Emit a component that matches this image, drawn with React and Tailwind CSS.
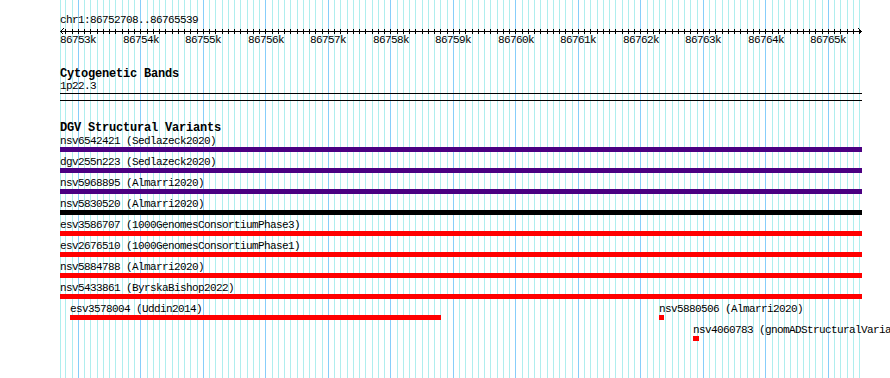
import React from "react";

const START = 86752708;
const px = (b) => 60 + (b - START) / 16;

const gridLines = (() => {
  const arr = [{ x: 60, major: false }];
  for (let b = 86752800; b <= 86765500; b += 100) {
    arr.push({ x: Math.floor(px(b)), major: b % 1000 === 0 });
  }
  return arr;
})();

const kbLabels = [];
for (let k = 86753; k <= 86765; k++) {
  kbLabels.push({ k, left: Math.round(px(k * 1000) - 18) });
}

const rows = [
  [{ name: "nsv6542421 (Sedlazeck2020)", x: 60, w: 802, color: "bg-[#4b0082]" }],
  [{ name: "dgv255n223 (Sedlazeck2020)", x: 60, w: 802, color: "bg-[#4b0082]" }],
  [{ name: "nsv5968895 (Almarri2020)", x: 60, w: 802, color: "bg-[#4b0082]" }],
  [{ name: "nsv5830520 (Almarri2020)", x: 60, w: 802, color: "bg-black" }],
  [{ name: "esv3586707 (1000GenomesConsortiumPhase3)", x: 60, w: 802, color: "bg-[#ff0000]" }],
  [{ name: "esv2676510 (1000GenomesConsortiumPhase1)", x: 60, w: 802, color: "bg-[#ff0000]" }],
  [{ name: "nsv5884788 (Almarri2020)", x: 60, w: 802, color: "bg-[#ff0000]" }],
  [{ name: "nsv5433861 (ByrskaBishop2022)", x: 60, w: 802, color: "bg-[#ff0000]" }],
  [
    { name: "esv3578004 (Uddin2014)", x: 70, w: 371, color: "bg-[#ff0000]" },
    { name: "nsv5880506 (Almarri2020)", x: 659, w: 5, color: "bg-[#ff0000]" },
  ],
  [{ name: "nsv4060783 (gnomADStructuralVariants)", x: 693, w: 6, color: "bg-[#ff0000]" }],
];

const txt = "font-['Liberation_Mono',monospace] text-[11px] leading-[11px] tracking-[-0.6px] text-black whitespace-nowrap";
const bold = "font-['Liberation_Mono',monospace] text-[12px] leading-[12px] tracking-[-0.2px] font-bold text-black whitespace-nowrap";

function Grid() {
  return (
    <svg className="absolute inset-0" width="890" height="378" shapeRendering="crispEdges">
      {gridLines.map((g, i) => (
        <line
          key={i}
          x1={g.x + 0.5}
          x2={g.x + 0.5}
          y1={0}
          y2={378}
          stroke={g.major ? "#87cefa" : "#afeeee"}
          strokeWidth="1"
        />
      ))}
    </svg>
  );
}

function Ruler() {
  const ticks = gridLines.slice(1);
  return (
    <svg width="890" height="9" className="block" shapeRendering="crispEdges">
      <line x1="60" x2="862" y1="5.5" y2="5.5" stroke="#000" strokeWidth="1" />
      {ticks.map((t, i) => (
        <line key={i} x1={t.x + 0.5} x2={t.x + 0.5} y1="3" y2="8" stroke="#000" strokeWidth="1" />
      ))}
      <polyline points="63.5,2.5 60.5,5.5 63.5,8.5" fill="none" stroke="#000" strokeWidth="1" />
      <polyline points="858.5,2.5 861.5,5.5 858.5,8.5" fill="none" stroke="#000" strokeWidth="1" />
    </svg>
  );
}

function FeatureRow({ feats }) {
  return (
    <div className="relative h-[21px]">
      {feats.map((f, i) => (
        <div key={i} className="absolute top-0 flex flex-col" style={{ left: f.x }}>
          <div className={`${txt} h-[11px]`}>{f.name}</div>
          <div className={`${f.color} h-[5px]`} style={{ width: f.w }} />
        </div>
      ))}
    </div>
  );
}

export default function App() {
  return (
    <div className="relative w-[890px] h-[378px] overflow-hidden bg-white">
      <Grid />
      <div className="relative flex flex-col pt-[15px]">
        <div className={`${txt} pl-[60px] h-[11px]`}>chr1:86752708..86765539</div>
        <Ruler />
        <div className="relative h-[11px]">
          {kbLabels.map((l) => (
            <span key={l.k} className={`${txt} absolute top-0`} style={{ left: l.left }}>
              {l.k}k
            </span>
          ))}
        </div>
        <div className={`${bold} pl-[60px] mt-[22px] h-[12px]`}>Cytogenetic Bands</div>
        <div className={`${txt} pl-[60px] mt-[1px] h-[11px]`}>1p22.3</div>
        <div className="ml-[60px] w-[802px] mt-[1px] h-[8px] border-y border-black" />
        <div className={`${bold} pl-[60px] mt-[21px] h-[12px]`}>DGV Structural Variants</div>
        <div className="mt-[2px] flex flex-col">
          {rows.map((r, i) => (
            <FeatureRow key={i} feats={r} />
          ))}
        </div>
      </div>
    </div>
  );
}
